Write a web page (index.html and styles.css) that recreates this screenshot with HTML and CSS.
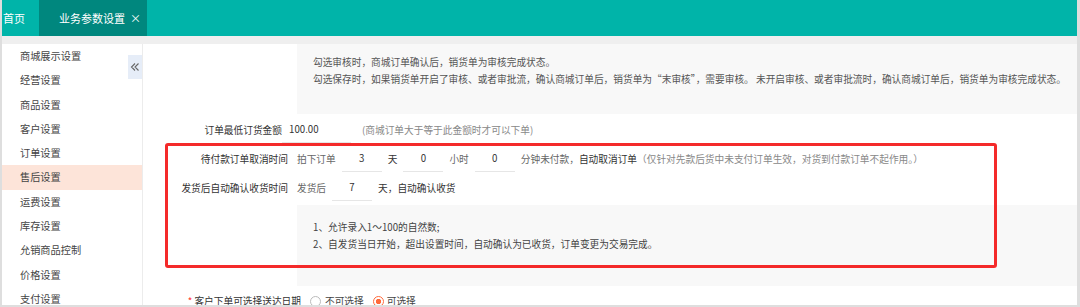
FILE: index.html
```html
<!DOCTYPE html>
<html lang="zh-CN">
<head>
    <meta charset="UTF-8">
    <meta name="viewport" content="width=device-width, initial-scale=1.0">
    <title>业务参数设置</title>
    <link rel="stylesheet" href="styles.css">
</head>
<body>

<div class="page">
    <!-- 顶部标签栏 -->
    <div class="tabbar">
        <span class="tab-home">首页</span>
        <span class="tab active">业务参数设置 <i class="tab-close">×</i></span>
    </div>
    <div class="band"></div>

    <div class="content">
        <!-- 左侧菜单 -->
        <div class="side">
            <ul class="menu">
                <li>商城展示设置</li>
                <li>经营设置</li>
                <li>商品设置</li>
                <li>客户设置</li>
                <li>订单设置</li>
                <li class="on">售后设置</li>
                <li>运费设置</li>
                <li>库存设置</li>
                <li>允销商品控制</li>
                <li>价格设置</li>
                <li>支付设置</li>
            </ul>
            <button class="collapse" title="收起">
                <svg width="10" height="10" viewBox="0 0 10 10">
                    <path d="M5 1.5 L1.5 5 L5 8.5 M8.5 1.5 L5 5 L8.5 8.5" fill="none" stroke="#666" stroke-width="1.1"/>
                </svg>
            </button>
        </div>

        <!-- 参数表单 -->
        <div class="main">
            <div class="note">
                <p>勾选审核时，商城订单确认后，销货单为审核完成状态。</p>
                <p>勾选保存时，如果销货单开启了审核、或者审批流，确认商城订单后，销货单为“末审核”，需要审核。 未开启审核、或者审批流时，确认商城订单后，销货单为审核完成状态。</p>
            </div>

            <div class="row row-min">
                <label class="label">订单最低订货金额</label>
                <input class="amount" type="text" value="100.00">
                <span class="hint">(商城订单大于等于此金额时才可以下单)</span>
            </div>

            <div class="row">
                <label class="label">待付款订单取消时间</label>
                <span class="muted">拍下订单</span>
                <input class="num" type="text" value="3">
                <span>天</span>
                <input class="num" type="text" value="0">
                <span class="muted">小时</span>
                <input class="num" type="text" value="0">
                <span class="muted">分钟未付款，</span><span>自动取消订单</span><span class="hint flush">（仅针对先款后货中未支付订单生效，对货到付款订单不起作用。）</span>
            </div>

            <div class="row">
                <label class="label">发货后自动确认收货时间</label>
                <span class="muted">发货后</span>
                <input class="num" type="text" value="7">
                <span>天，自动确认收货</span>
            </div>

            <div class="tip">
                <p>1、允许录入1～100的自然数;</p>
                <p>2、自发货当日开始，超出设置时间，自动确认为已收货，订单变更为交易完成。</p>
            </div>

            <div class="row row-radio">
                <label class="label"><em>*</em> 客户下单可选择送达日期</label>
                <span class="radio"></span><span class="radio-text">不可选择</span>
                <span class="radio checked"></span><span class="radio-text">可选择</span>
            </div>

            <!-- 标注框 -->
            <div class="mark"></div>
        </div>
    </div>
</div>

</body>
</html>
```

FILE: styles.css
```css
* {
    box-sizing: border-box;
}
body {
    margin: 0;
    font-family: "Noto Sans CJK SC", "Liberation Sans", sans-serif;
    font-size: 9.7px;
    color: #333;
    background-color: #fff;
}
p {
    margin: 0;
}
.page {
    width: 1080px;
    height: 307px;
    display: flex;
    flex-direction: column;
    border: solid #dedede;
    border-width: 0 3px 2px 2px;
    overflow: hidden;
}

/* 顶部标签栏 */
.tabbar {
    flex: none;
    height: 36px;
    display: flex;
    background-color: #00b4a9;
    color: #fff;
    font-size: 11px;
}
.tab-home {
    display: flex;
    align-items: center;
    padding: 0 14px 0 1px;
}
.tab {
    display: flex;
    align-items: center;
    width: 108px;
    padding-left: 20px;
}
.tab.active {
    background-color: #00877e;
}
.tab-close {
    font-style: normal;
    margin-left: 5px;
    font-size: 11px;
}
.band {
    flex: none;
    height: 8px;
    background-color: #efefef;
}

.content {
    flex: 1;
    display: flex;
    min-height: 0;
}

/* 左侧菜单 */
.side {
    flex: none;
    width: 141px;
    position: relative;
    border-right: 1px solid #ececec;
}
.menu {
    list-style: none;
    margin: 0;
    padding: 0;
}
.menu li {
    height: 24.3px;
    line-height: 24.3px;
    padding-left: 18px;
    font-size: 10.2px;
    color: #444;
}
.menu li.on {
    background-color: #fde4d9;
}
.collapse {
    position: absolute;
    top: 11px;
    right: 0;
    width: 14px;
    height: 24px;
    padding: 0;
    border: none;
    background-color: #e6edf8;
    display: flex;
    align-items: center;
    justify-content: center;
}

/* 表单区 */
.main {
    flex: 1;
    position: relative;
}
.note {
    height: 70px;
    margin-left: 154px;
    padding: 10px 16px 0;
    line-height: 17px;
    background-color: #f8f8f8;
    color: #555;
    white-space: nowrap;
}
.row {
    display: flex;
    align-items: center;
    height: 29px;
    white-space: nowrap;
}
.row-min {
    margin-top: 1px;
}
.label {
    width: 145px;
    margin-right: 9px;
    text-align: right;
    color: #333;
}
.row-min .label {
    width: 139px;
    margin-right: 0;
}
.row input {
    font: inherit;
    color: #333;
    height: 26px;
    border: none;
    border-bottom: 1px solid #e6e6e6;
    outline: none;
    background: transparent;
}
.amount {
    width: 69px;
    padding: 0 0 0 7px;
}
.num {
    width: 40px;
    margin: 0 6px;
    padding: 0;
    text-align: center;
}
.muted {
    color: #666;
}
.hint {
    margin-left: 11px;
    color: #888;
}
.hint.flush {
    margin-left: 0;
}
.tip {
    height: 81px;
    margin: 3px 0 0 154px;
    padding: 14px 16px 0;
    line-height: 17px;
    background-color: #f8f8f8;
    color: #444;
}
.row-radio {
    height: 22px;
    margin-top: 4px;
}
.row-radio .label {
    width: 158px;
}
.row-radio em {
    font-style: normal;
    color: #f33;
}
.radio {
    width: 11px;
    height: 11px;
    border: 1px solid #bbb;
    border-radius: 50%;
    margin-right: 4px;
}
.radio.checked {
    border-color: #ff6a3c;
    background: radial-gradient(circle, #ff6a3c 0 2.4px, #fff 3px);
    margin-left: 9px;
    margin-right: 3px;
}
.radio-text {
    color: #444;
}

/* 红色标注框 */
.mark {
    position: absolute;
    left: 22px;
    top: 99px;
    width: 832px;
    height: 125px;
    border: 3px solid #f42a2a;
    border-radius: 3px;
    pointer-events: none;
}
```
